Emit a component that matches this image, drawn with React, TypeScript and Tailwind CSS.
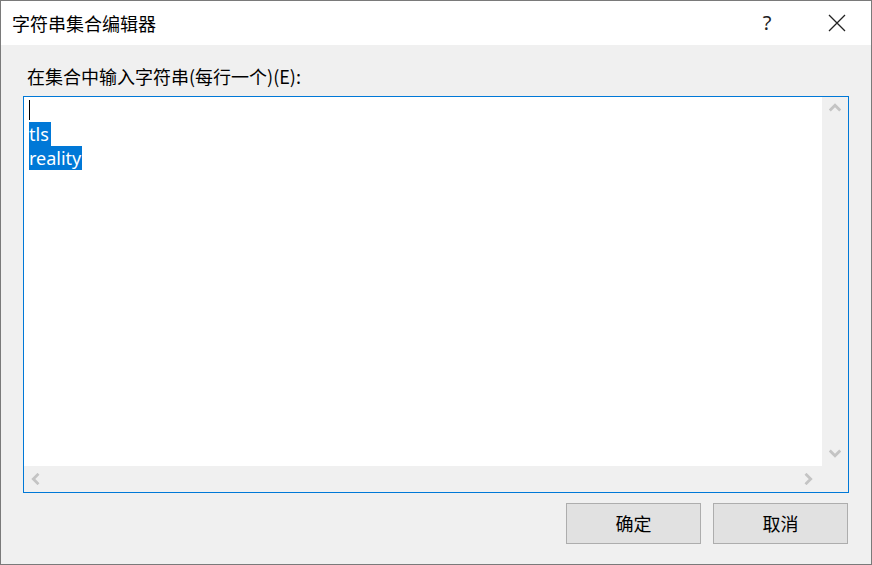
import React from "react";

const cjk = { fontFamily: '"Noto Sans CJK SC", "Noto Sans", sans-serif' };
const latin = { fontFamily: '"Noto Sans", "Noto Sans CJK SC", sans-serif' };

function Chevron({ dir }: { dir: "up" | "down" | "left" | "right" }) {
  const rot = { up: 0, down: 180, left: 270, right: 90 }[dir];
  return (
    <svg width="12" height="12" viewBox="0 0 12 12" style={{ transform: `rotate(${rot}deg)` }}>
      <path d="M0.8 9.5 L6 4.3 L11.2 9.5" fill="none" stroke="#c4c4c4" strokeWidth="2.8" />
    </svg>
  );
}

export default function App() {
  return (
    <div className="w-[872px] h-[565px] border border-[#7a7a7a] bg-[#f0f0f0] flex flex-col overflow-hidden" style={cjk}>
      {/* Title bar */}
      <div className="h-[44px] bg-white flex items-center shrink-0">
        <div className="pl-[11px] text-[18px] leading-[24px] text-black flex-1">字符串集合编辑器</div>
        <div className="w-[46px] h-[44px] flex items-center justify-center text-[20px] text-[#222] mr-[24px]" style={latin}>?</div>
        <div className="w-[46px] h-[44px] flex items-center justify-center mr-[11px]">
          <svg width="18" height="18" viewBox="0 0 18 18">
            <path d="M1 1 L17 17 M17 1 L1 17" stroke="#222" strokeWidth="1.3" fill="none" />
          </svg>
        </div>
      </div>

      {/* Body */}
      <div className="flex-1 flex flex-col px-[22px]">
        <div className="mt-[19px] pl-[4px] text-[18px] leading-[24px] text-black">在集合中输入字符串(每行一个)(E):</div>
        <div className="mt-[8px] h-[397px] border border-[#0078d7] bg-white grid grid-cols-[1fr_26px] grid-rows-[1fr_26px]">
          <div className="pt-[1px] pl-[5px] text-[18px] leading-[24px] text-black" style={latin}>
            <div className="h-[24px] flex items-center">
              <span className="w-px h-[20px] bg-black" />
            </div>
            <div className="h-[24px]">
              <span className="bg-[#0078d7] text-white inline-block h-[24px] pr-[2px]">tls</span>
            </div>
            <div className="h-[24px]">
              <span className="bg-[#0078d7] text-white inline-block h-[24px] pr-[1px]">reality</span>
            </div>
          </div>
          <div className="bg-[#f0f0f0] flex flex-col items-center justify-between pt-[4px] pb-[6px]">
            <Chevron dir="up" />
            <Chevron dir="down" />
          </div>
          <div className="bg-[#f0f0f0] flex items-center justify-between pl-[5px] pr-[7px]">
            <Chevron dir="left" />
            <Chevron dir="right" />
          </div>
          <div className="bg-[#f0f0f0]" />
        </div>
        <div className="mt-[10px] mr-[1px] flex justify-end gap-[12px]">
          <button className="w-[135px] h-[41px] border border-[#adadad] bg-[#e1e1e1] text-[18px] text-black" style={cjk}>确定</button>
          <button className="w-[135px] h-[41px] border border-[#adadad] bg-[#e1e1e1] text-[18px] text-black" style={cjk}>取消</button>
        </div>
      </div>
    </div>
  );
}
